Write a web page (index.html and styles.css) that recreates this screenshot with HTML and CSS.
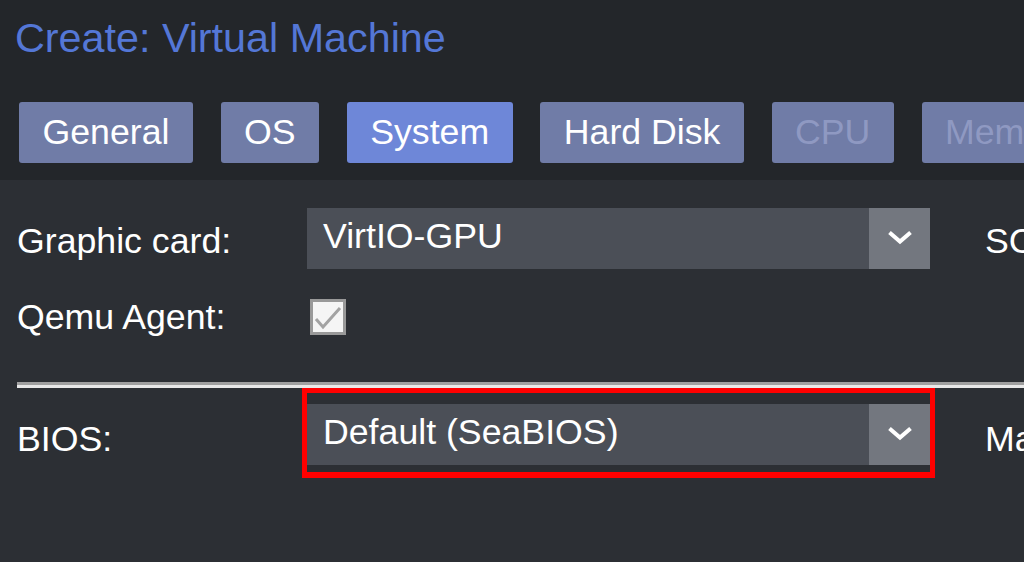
FILE: index.html
```html
<!DOCTYPE html>
<html>
<head>
<meta charset="utf-8">
<link rel="stylesheet" href="styles.css">
</head>
<body>
<div class="page">
  <header class="header">
    <div class="title">Create: Virtual Machine</div>
    <nav class="tabs">
      <span class="tab">General</span>
      <span class="tab">OS</span>
      <span class="tab tab-active">System</span>
      <span class="tab">Hard Disk</span>
      <span class="tab tab-disabled">CPU</span>
      <span class="tab tab-disabled">Memory</span>
    </nav>
  </header>
  <main class="form">
    <div class="row row-combo">
      <label class="label">Graphic card:</label>
      <div class="combo">
        <div class="combo-input">VirtIO-GPU</div>
        <div class="combo-trigger">
          <svg width="24" height="14" viewBox="0 0 24 14"><polyline points="1.5,1.5 12,10.5 22.5,1.5" fill="none" stroke="#ffffff" stroke-width="4"/></svg>
        </div>
      </div>
      <label class="label label-right">SCSI Controller:</label>
    </div>
    <div class="row row-check">
      <label class="label label-check">Qemu Agent:</label>
      <div class="checkbox">
        <svg width="30" height="30" viewBox="0 0 30 30"><polyline points="3,17 10,25 27,6" fill="none" stroke="#a3a3a3" stroke-width="3"/></svg>
      </div>
    </div>
    <div class="separator"></div>
    <div class="row row-bios">
      <label class="label label-bios">BIOS:</label>
      <div class="highlight">
        <div class="combo">
          <div class="combo-input">Default (SeaBIOS)</div>
          <div class="combo-trigger">
            <svg width="24" height="14" viewBox="0 0 24 14"><polyline points="1.5,1.5 12,10.5 22.5,1.5" fill="none" stroke="#ffffff" stroke-width="4"/></svg>
          </div>
        </div>
      </div>
      <label class="label label-right label-bios">Machine:</label>
    </div>
  </main>
</div>
</body>
</html>
```
FILE: styles.css
```css
html, body {
  margin: 0;
  padding: 0;
  background: #2c2f34;
}
body {
  font-family: "Liberation Sans", Arial, Helvetica, sans-serif;
  color: #ffffff;
  width: 1024px;
  height: 562px;
  overflow: hidden;
}
.page {
  width: 1024px;
  height: 562px;
  overflow: hidden;
}
.header {
  background: #23262a;
  height: 180px;
  box-sizing: border-box;
  padding: 13px 0 0 15px;
  overflow: hidden;
}
.title {
  font-size: 41.3px;
  line-height: 50px;
  color: #5477d6;
  white-space: nowrap;
}
.tabs {
  display: flex;
  gap: 27.6px;
  margin-top: 39px;
  margin-left: 4px;
  white-space: nowrap;
}
.tab {
  flex-shrink: 0;
  display: block;
  height: 61px;
  line-height: 61px;
  padding: 0 23.5px;
  font-size: 35.7px;
  background: #707ca7;
  color: #ffffff;
  border-radius: 3px;
}
.tab-active {
  background: #6e87d8;
}
.tab-disabled {
  color: #8f99c2;
}
.form {
  padding-left: 17px;
}
.row {
  display: flex;
  white-space: nowrap;
}
.label {
  flex-shrink: 0;
  width: 290px;
  font-size: 35.7px;
  color: #ffffff;
}
.row-combo {
  margin-top: 28px;
  height: 61px;
}
.row-combo .label {
  line-height: 61px;
  padding-top: 3px;
}
.label-right {
  width: auto;
  margin-left: 55px;
}
.combo {
  flex-shrink: 0;
  display: flex;
  width: 623px;
  height: 61px;
}
.combo-input {
  flex: 1;
  background: #4b4f57;
  font-size: 35.7px;
  line-height: 57px;
  padding-left: 16px;
  color: #ffffff;
}
.combo-trigger {
  width: 61px;
  background: #73777f;
  display: flex;
  align-items: center;
  justify-content: center;
  padding-bottom: 2px;
  box-sizing: border-box;
}
.combo-trigger svg {
  display: block;
}
.row-check {
  margin-top: 30px;
  height: 36px;
}
.label-check {
  line-height: 36px;
}
.checkbox {
  flex-shrink: 0;
  margin-left: 3px;
  width: 36px;
  height: 36px;
  box-sizing: border-box;
  border: 3px solid #999999;
  background: #f5f5f5;
  display: flex;
  align-items: center;
  justify-content: center;
}
.checkbox svg {
  display: block;
}
.separator {
  margin-top: 47px;
  height: 3px;
  background: #a0a0a0;
  border-bottom: 3px solid #e8e8e8;
}
.row-bios {
  height: 91px;
}
.label-bios {
  line-height: 40px;
  padding-top: 31px;
}
.row-bios > .label:first-child {
  width: 285px;
}
.highlight {
  flex-shrink: 0;
  border: 5px solid #ff0000;
  border-bottom-width: 6px;
  padding: 11px 0 7px 0;
  height: 61px;
}
.row-bios .label-right {
  margin-left: 50px;
}
```
